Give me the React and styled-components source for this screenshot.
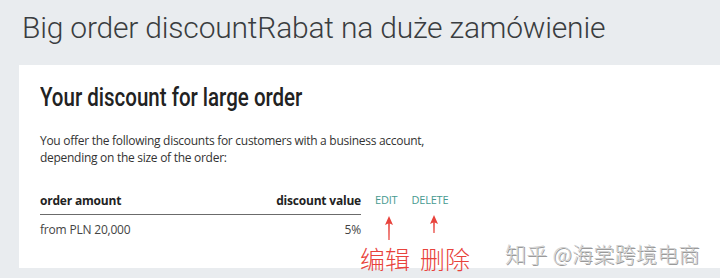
// Big order discount settings card
import React from "react";
import styled, { createGlobalStyle } from "styled-components";

const GlobalStyle = createGlobalStyle`
  html, body {
    margin: 0;
    padding: 0;
    background: #e9ecef;
    overflow: hidden;
  }
`;

const Page = styled.div`
  position: relative;
  width: 720px;
  height: 278px;
  padding-left: 19px;
  box-sizing: border-box;
`;

const Title = styled.h1`
  margin: 0;
  height: 65px;
  padding: 6px 0 0 3px;
  box-sizing: border-box;
  font-family: Roboto, "Noto Sans", sans-serif;
  font-weight: 300;
  font-size: 30px;
  line-height: 44px;
  letter-spacing: -0.2px;
  color: #3a3d40;
  white-space: nowrap;
`;

const Card = styled.section`
  background: #fff;
  height: 203px;
  padding: 18px 21px 0;
  box-sizing: border-box;
`;

const Heading = styled.h2`
  margin: 0;
  font-family: Roboto, "Noto Sans", sans-serif;
  font-weight: 500;
  font-size: 25px;
  line-height: 30px;
  color: #222;
  transform: scaleX(0.82);
  transform-origin: left center;
  white-space: nowrap;
`;

const Intro = styled.p`
  margin: 19px 0 0;
  font-family: "Open Sans", sans-serif;
  font-size: 12px;
  line-height: 17px;
  color: #333;
  letter-spacing: -0.28px;
`;

const Row = styled.div`
  display: flex;
  align-items: center;
  margin-top: ${(p) => p.$top}px;
`;

const Cells = styled.div`
  width: 321px;
  display: flex;
  justify-content: space-between;
  align-items: center;
  height: ${(p) => (p.$head ? 24 : 22)}px;
  border-bottom: ${(p) => (p.$head ? "1px solid #6b6b6b" : "none")};
  font-family: "Open Sans", sans-serif;
  font-size: 12px;
  font-weight: ${(p) => (p.$head ? 700 : 400)};
  color: ${(p) => (p.$head ? "#222" : "#444")};
  letter-spacing: -0.2px;
  padding-bottom: ${(p) => (p.$head ? 5 : 0)}px;
  box-sizing: border-box;
`;

const Actions = styled.div`
  display: flex;
  gap: 14px;
  margin-left: 14px;
  align-self: flex-start;
  padding-top: 1px;
`;

const ActionLink = styled.a`
  font-family: "Open Sans", sans-serif;
  font-size: 11px;
  color: #479a90;
  text-transform: uppercase;
  letter-spacing: -0.2px;
  text-decoration: none;
  cursor: pointer;
`;

const Arrow = styled.svg`
  position: absolute;
  left: ${(p) => p.$x - 5}px;
  top: ${(p) => p.$y}px;
`;

const Note = styled.div`
  position: absolute;
  left: 360px;
  top: 241px;
  display: flex;
  gap: 10px;
  font-family: "Noto Sans CJK SC", sans-serif;
  font-weight: 300;
  font-size: 25px;
  line-height: 34px;
  color: #e8433c;
`;

const Watermark = styled.div`
  position: absolute;
  left: 505px;
  top: 239px;
  font-family: "Noto Sans CJK SC", sans-serif;
  font-weight: 300;
  font-size: 21px;
  line-height: 28px;
  letter-spacing: 0.3px;
  color: #d2d2d2;
  text-shadow: 1px 1px 0 #9a9a9a;
  white-space: nowrap;
`;

function RedArrow({ x, y, h }) {
  return (
    <Arrow $x={x} $y={y} width="10" height={h} viewBox={`0 0 10 ${h}`}>
      <path d={`M5 0 L9 9 L5.8 7.5 L5.6 ${h} L4.4 ${h} L4.2 7.5 L1 9 Z`} fill="#e8433c" />
    </Arrow>
  );
}

export default function App() {
  return (
    <>
      <GlobalStyle />
      <Page>
        <Title>Big order discountRabat na duże zamówienie</Title>
        <Card>
          <Heading>Your discount for large order</Heading>
          <Intro>
            You offer the following discounts for customers with a business account,
            <br />
            depending on the size of the order:
          </Intro>
          <Row $top={25}>
            <Cells $head>
              <span>order amount</span>
              <span>discount value</span>
            </Cells>
            <Actions>
              <ActionLink>Edit</ActionLink>
              <ActionLink>Delete</ActionLink>
            </Actions>
          </Row>
          <Row $top={3}>
            <Cells>
              <span>from PLN 20,000</span>
              <span>5%</span>
            </Cells>
          </Row>
        </Card>
        <RedArrow x={389} y={216} h={24} />
        <RedArrow x={434} y={215} h={18} />
        <Note>
          <span>编辑</span>
          <span>删除</span>
        </Note>
        <Watermark>知乎 @海棠跨境电商</Watermark>
      </Page>
    </>
  );
}
